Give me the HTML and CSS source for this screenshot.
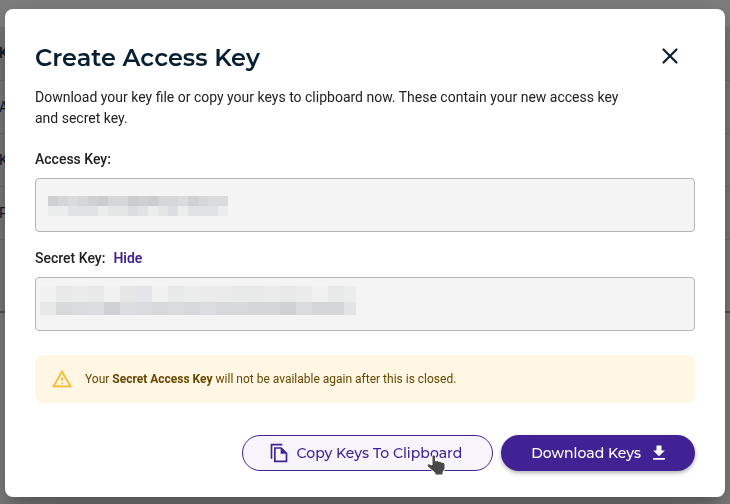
FILE: index.html
```
<!DOCTYPE html>
<html lang="en">
<head>
	<meta charset="utf-8">
	<title>Create Access Key</title>
	<link rel="stylesheet" href="styles.css">
</head>
<body>
	<div class="key-list">
		<div class="key-row key-head">K</div>
		<div class="key-row">A</div>
		<div class="key-row">K</div>
		<div class="key-row">P</div>
		<div class="key-footer"></div>
	</div>
	<div class="overlay">
		<div class="dialog" role="dialog" aria-labelledby="dialog-title">
			<div class="dialog-header">
				<h1 class="dialog-title" id="dialog-title">Create Access Key</h1>
				<button class="close-button" type="button" aria-label="Close">
					<svg width="18" height="18" viewBox="0 0 18 18"><path d="M2.500 2.500 15.500 15.500M15.500 2.500 2.500 15.500" fill="none" stroke="#081f32" stroke-width="2.200" stroke-linecap="round"/></svg>
				</button>
			</div>
			<p class="description">Download your key file or copy your keys to clipboard now. These contain your new access key and secret key.</p>

			<div class="field-label"><label for="access-key">Access Key:</label></div>
			<div class="field">
				<input class="field-input" id="access-key" type="text" readonly>
				<svg class="mask mask-access" width="180" height="20" viewBox="0 0 18 2" preserveAspectRatio="none" shape-rendering="crispEdges">
					<path fill="#d5d6d8" d="M0 0h18v1H0z"/>
					<path fill="#cfd0d2" d="M0 0h1v1H0zM4 0h1v1H4zM9 0h1v1H9zM14 0h1v1h-1z"/>
					<path fill="#cbccce" d="M5 0h1v1H5zM8 0h1v1H8zM10 0h1v1h-1z"/>
					<path fill="#dadbdd" d="M2 0h1v1H2zM13 0h1v1h-1zM16 0h2v1h-2z"/>
					<path fill="#e1e2e4" d="M0 1h18v1H0z"/>
					<path fill="#ebeded" d="M0 1h2v1H0zM5 1h1v1H5zM10 1h1v1h-1zM13 1h1v1h-1zM17 1h1v1h-1z"/>
					<path fill="#e4e6e5" d="M6 1h2v1H6zM11 1h1v1h-1z"/>
					<path fill="#dcdde0" d="M8 1h1v1H8zM12 1h1v1h-1z"/>
				</svg>
			</div>

			<div class="field-label"><label for="secret-key">Secret Key:</label><a class="toggle-link" href="#">Hide</a></div>
			<div class="field">
				<input class="field-input" id="secret-key" type="text" readonly>
				<svg class="mask mask-secret" width="316" height="29" viewBox="0 0 316 29" shape-rendering="crispEdges">
					<path fill="#ebebeb" d="M0 0h316v16H0z"/>
					<path fill="#f1f1f1" d="M0 0h16v16H0zM64 0h16v16H64zM112 0h16v16h-16zM272 0h16v16h-16z"/>
					<path fill="#e8eae9" d="M16 0h16v16H16zM48 0h16v16H48zM128 0h16v16h-16zM192 0h32v16h-32zM240 0h16v16h-16zM288 0h16v16h-16z"/>
					<path fill="#e6e6e7" d="M80 0h16v16H80z"/>
					<path fill="#e4e5e8" d="M96 0h16v16H96z"/>
					<path fill="#ebedec" d="M144 0h16v16h-16zM304 0h12v16h-12z"/>
					<path fill="#d7d8da" d="M0 16h316v13H0z"/>
					<path fill="#e6e8e7" d="M0 16h16v13H0z"/>
					<path fill="#dcdde0" d="M48 16h16v13H48zM80 16h16v13H80zM160 16h16v13h-16z"/>
					<path fill="#dadbdd" d="M32 16h16v13H32zM96 16h16v13H96zM128 16h16v13h-16zM256 16h16v13h-16z"/>
					<path fill="#d0d1d3" d="M64 16h16v13H64zM240 16h16v13h-16z"/>
					<path fill="#d4d5d7" d="M208 16h32v13h-32zM272 16h32v13h-32z"/>
					<path fill="#e2e3e5" d="M304 16h12v13h-12z"/>
				</svg>
			</div>

			<div class="warning" role="alert">
				<svg width="22" height="22" viewBox="0 0 24 24" fill="#fdbb2d"><path d="M12 5.990 19.530 19H4.470L12 5.990M12 2 1 21h22L12 2zm1 14h-2v2h2v-2zm0-6h-2v4h2v-4z"/></svg>
				<span>Your <strong>Secret Access Key</strong> will not be available again after this is closed.</span>
			</div>

			<div class="actions">
				<button class="button button-outline" type="button">
					<svg width="20" height="20" viewBox="0 0 24 24" fill="#412294"><path d="M16 1H2v18h2V3h12V1zm-1 4H6v18h16V12l-7-7zM8 21V7h6v6h6v8H8z"/></svg>
					Copy Keys To Clipboard
					<svg class="cursor" width="22" height="24" viewBox="0 0 22 24"><path d="M7 3.500C7 1.500 10 1.500 10.500 3.500V8l2-.5 1 1 2-.5 1 1.500 2-.5L20 11v5l-2 3v3h-8v-2l-7-6c-1.500-1.500-.5-3.500 1.500-3L7 12z" fill="#484848" stroke="#fff" stroke-width="1"/></svg>
				</button>
				<button class="button button-primary" type="button">
					Download Keys
					<svg width="20" height="20" viewBox="0 0 24 24" fill="#fff"><path d="M19 9h-4V3H9v6H5l7 7 7-7zM5 18v2h14v-2H5z"/></svg>
				</button>
			</div>
		</div>
	</div>
</body>
</html>
```

FILE: styles.css
```
* {
	box-sizing: border-box;
}
body {
	margin: 0;
	min-height: 100vh;
	background-color: #fff;
	color: #212121;
	font-family: Roboto, "Liberation Sans", sans-serif;
	font-size: 14px;
	overflow: hidden;
}
.key-list {
	padding-top: 27px;
}
.key-row {
	height: 53px;
	border-bottom: 1px solid #d8d8d8;
	background-color: #f7f7f7;
	color: #06325c;
	font-size: 14px;
	line-height: 53px;
	text-indent: -1px;
}
.key-head {
	height: 54px;
	background-color: #eee;
	font-weight: 500;
}
.key-footer {
	height: 73px;
	border-bottom: 2px solid #aaa;
	background-color: #f7f7f7;
}
.overlay {
	position: fixed;
	inset: 0;
	padding: 9px 5px;
	background-color: rgba(0, 0, 0, 0.5);
}
.dialog {
	max-width: 720px;
	margin: 0 auto;
	padding: 30px 30px 26px;
	border-radius: 8px;
	background-color: #fff;
	box-shadow: 0 11px 15px -7px rgba(0, 0, 0, 0.2), 0 24px 38px 3px rgba(0, 0, 0, 0.14), 0 9px 46px 8px rgba(0, 0, 0, 0.12);
}
.dialog-header {
	display: flex;
	align-items: flex-start;
	justify-content: space-between;
}
.dialog-title {
	margin: 0;
	color: #081f32;
	font-family: Montserrat, Inter, sans-serif;
	font-size: 24px;
	font-weight: 600;
	line-height: 38px;
}
.close-button {
	display: flex;
	padding: 8px 16px;
	border: 0;
	background: none;
}
.description {
	margin: 10px 0 20px;
	padding-right: 60px;
	line-height: 21px;
}
.field-label {
	display: flex;
	gap: 8px;
	font-weight: 500;
	line-height: 20px;
}
.toggle-link {
	color: #412294;
	font-weight: 600;
	text-decoration: none;
}
.field {
	position: relative;
	margin: 9px 0 16px;
}
.field-input {
	display: block;
	width: 100%;
	height: 54px;
	padding: 0 12px;
	border: 1px solid #b5b5b5;
	border-radius: 4px;
	background-color: #f4f4f4;
	font: inherit;
}
.mask {
	position: absolute;
}
.mask-access {
	top: 18px;
	left: 13px;
}
.mask-secret {
	top: 9px;
	left: 5px;
}
.warning {
	display: flex;
	align-items: center;
	gap: 12px;
	min-height: 48px;
	margin-top: 24px;
	padding: 0 16px;
	border-radius: 8px;
	background-color: #fff6e3;
	color: #664600;
	font-size: 12px;
	line-height: 16px;
}
.actions {
	display: flex;
	justify-content: flex-end;
	gap: 8px;
	margin-top: 32px;
}
.button {
	position: relative;
	display: flex;
	align-items: center;
	gap: 8px;
	height: 36px;
	border: 0;
	border-radius: 18px;
	font-family: Montserrat, Inter, sans-serif;
	font-size: 14px;
	font-weight: 500;
	white-space: nowrap;
}
.button-outline {
	padding: 0 30px 0 26px;
	border: 1px solid #412294;
	background-color: #f7f5fb;
	color: #412294;
}
.button-primary {
	padding: 0 26px 0 30px;
	background-color: #412294;
	color: #fff;
	box-shadow: 0 2px 4px rgba(0, 0, 0, 0.3);
}
.cursor {
	position: absolute;
	top: 17px;
	right: 45px;
}
```
